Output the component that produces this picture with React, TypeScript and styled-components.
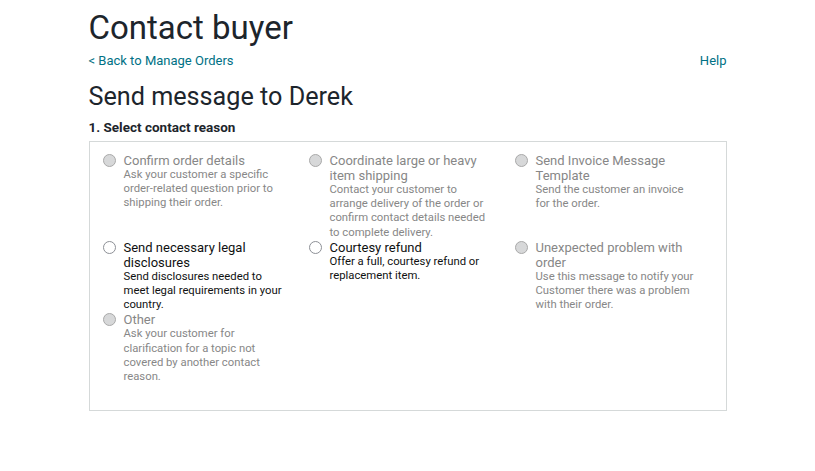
import React from "react";
import styled, { createGlobalStyle } from "styled-components";

const Global = createGlobalStyle`
  html, body { margin: 0; padding: 0; background: #fff; }
  body { font-family: Roboto, "Liberation Sans", sans-serif; color: #1d252c; }
`;

const Page = styled.div`
  width: 638px;
  margin: 0 auto;
  padding-top: 8px;
`;

const Title = styled.h1`
  margin: 0;
  font-size: 33px;
  font-weight: 400;
  line-height: 40px;
  color: #1d252c;
`;

const NavRow = styled.div`
  display: flex;
  justify-content: space-between;
  align-items: center;
  margin-top: 4px;
  font-size: 13px;
  line-height: 18px;
`;

const Link = styled.a`
  color: #007185;
  text-decoration: none;
`;

const SubTitle = styled.h2`
  margin: 12px 0 0;
  font-size: 25.2px;
  font-weight: 400;
  line-height: 30px;
  color: #1d252c;
`;

const StepLabel = styled.div`
  margin-top: 6px;
  font-size: 13.5px;
  font-weight: 700;
  line-height: 18px;
  color: #1d252c;
`;

const Box = styled.div`
  margin-top: 5px;
  border: 1px solid #d5d9d9;
  padding: 11px 12px 25px 13px;
  height: 232px;
  display: grid;
  grid-template-columns: repeat(3, 206px);
  align-content: start;
`;

const Option = styled.label<{ $disabled?: boolean }>`
  display: flex;
  gap: 8px;
  align-items: flex-start;
  color: ${(p) => (p.$disabled ? "#878787" : "#0f1111")};
`;

const Radio = styled.span<{ $disabled?: boolean }>`
  flex: none;
  width: 13px;
  height: 13px;
  margin-top: 1px;
  border-radius: 50%;
  box-sizing: border-box;
  border: 1px solid ${(p) => (p.$disabled ? "#a9a9a9" : "#8d9096")};
  background: ${(p) => (p.$disabled ? "#d7d8d9" : "#fff")};
`;

const Text = styled.div`
  width: 162px;
`;

const Label = styled.div`
  font-size: 13px;
  line-height: 15px;
`;

const Desc = styled.div`
  font-size: 11.3px;
  line-height: 14.2px;
`;

type Item = { label: string; desc: string; disabled?: boolean };

const items: Item[] = [
  { label: "Confirm order details", desc: "Ask your customer a specific order-related question prior to shipping their order.", disabled: true },
  { label: "Coordinate large or heavy item shipping", desc: "Contact your customer to arrange delivery of the order or confirm contact details needed to complete delivery.", disabled: true },
  { label: "Send Invoice Message Template", desc: "Send the customer an invoice for the order.", disabled: true },
  { label: "Send necessary legal disclosures", desc: "Send disclosures needed to meet legal requirements in your country." },
  { label: "Courtesy refund", desc: "Offer a full, courtesy refund or replacement item." },
  { label: "Unexpected problem with order", desc: "Use this message to notify your Customer there was a problem with their order.", disabled: true },
  { label: "Other", desc: "Ask your customer for clarification for a topic not covered by another contact reason.", disabled: true },
];

export default function App() {
  return (
    <>
      <Global />
      <Page>
        <Title>Contact buyer</Title>
        <NavRow>
          <Link href="#">&lt; Back to Manage Orders</Link>
          <Link href="#">Help</Link>
        </NavRow>
        <SubTitle>Send message to Derek</SubTitle>
        <StepLabel>1. Select contact reason</StepLabel>
        <Box>
          {items.map((it) => (
            <Option key={it.label} $disabled={it.disabled}>
              <Radio $disabled={it.disabled} />
              <Text>
                <Label>{it.label}</Label>
                <Desc>{it.desc}</Desc>
              </Text>
            </Option>
          ))}
        </Box>
      </Page>
    </>
  );
}
